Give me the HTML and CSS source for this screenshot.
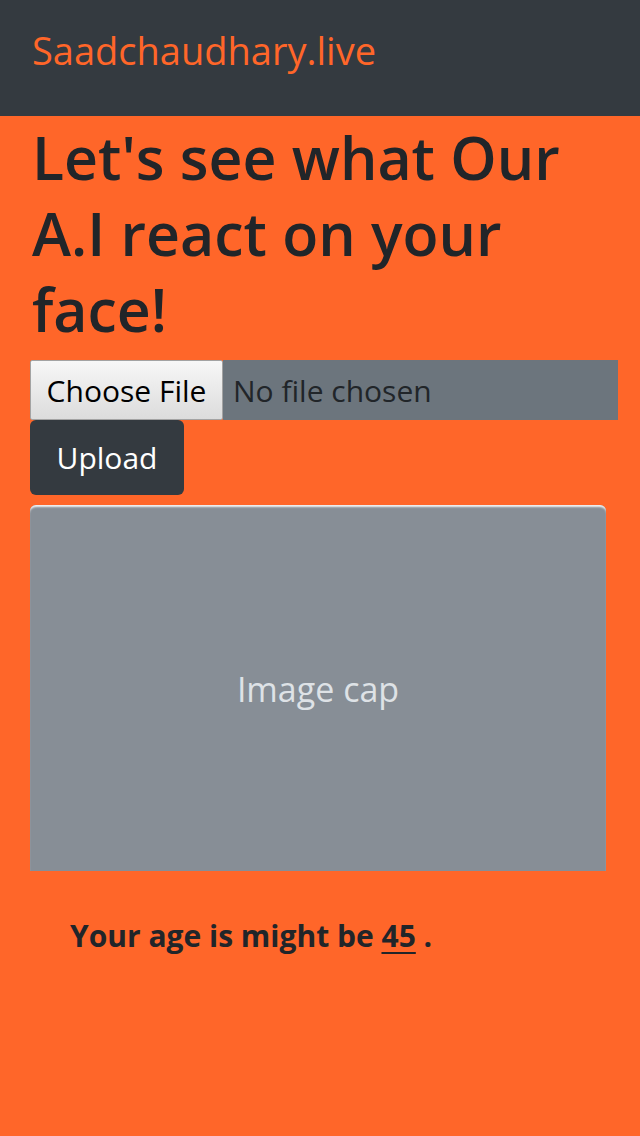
FILE: index.html
```html
<!DOCTYPE html>
<html lang="en">
<head>
<meta charset="utf-8">
<title>Saadchaudhary.live</title>
<link rel="stylesheet" href="styles.css">
</head>
<body>
<header class="navbar">
  <a class="brand" href="#">Saadchaudhary.live</a>
</header>
<main class="container">
  <h1 class="title">Let's see what Our A.I react on your face!</h1>
  <form class="upload-form">
    <div class="file-input">
      <span class="file-btn">Choose File</span>
      <span class="file-name">No file chosen</span>
    </div>
    <button type="button" class="btn-upload">Upload</button>
  </form>
  <div class="card">
    <div class="card-img">Image cap</div>
  </div>
  <p class="result">Your age is might be <u>45</u> .</p>
</main>
</body>
</html>
```
FILE: styles.css
```css
html, body {
  margin: 0;
  padding: 0;
}
body {
  background: #ff6629;
  font-family: "Open Sans", "Noto Sans", sans-serif;
  color: #212529;
  min-height: 1136px;
}
.navbar {
  height: 116px;
  background: #343a40;
  display: flex;
  align-items: center;
  padding-left: 32px;
  box-sizing: border-box;
}
.brand {
  color: #ff6629;
  text-decoration: none;
  font-size: 38px;
  line-height: 1;
  padding-bottom: 16px;
}
.container {
  padding: 0 22px 0 30px;
}
.title {
  margin: 3px 0 13px 2px;
  font-size: 59px;
  line-height: 76px;
  font-weight: 600;
}
.upload-form {
  display: flex;
  flex-direction: column;
  align-items: flex-start;
}
.file-input {
  display: flex;
  width: 588px;
  height: 60px;
  font-size: 30px;
}
.file-btn {
  width: 193px;
  box-sizing: border-box;
  border: 1px solid #a3a3a3;
  background: linear-gradient(#f7f7f7, #dcdcdc);
  color: #000;
  display: flex;
  align-items: center;
  justify-content: center;
  border-radius: 2px;
}
.file-name {
  flex: 1;
  background: #6c757d;
  display: flex;
  align-items: center;
  padding-left: 10px;
  color: #212529;
}
.btn-upload {
  width: 154px;
  height: 75px;
  border: none;
  border-radius: 6px;
  background: #343a40;
  color: #fff;
  font-family: inherit;
  font-size: 30px;
  padding: 0;
  cursor: pointer;
}
.card {
  width: 576px;
  margin-top: 10px;
}
.card-img {
  height: 366px;
  background: #878e96;
  border-radius: 6px 6px 0 0;
  box-shadow: inset 0 3px 2px -1px #f2f2f2;
  display: flex;
  align-items: center;
  justify-content: center;
  color: #dee2e6;
  font-size: 34px;
  font-weight: 500;
  padding-top: 2px;
  box-sizing: border-box;
}
.result {
  margin: 44px 0 0 40px;
  font-size: 30px;
  font-weight: 700;
}
.result u {
  text-underline-offset: 5px;
  text-decoration-thickness: 2px;
}
```
